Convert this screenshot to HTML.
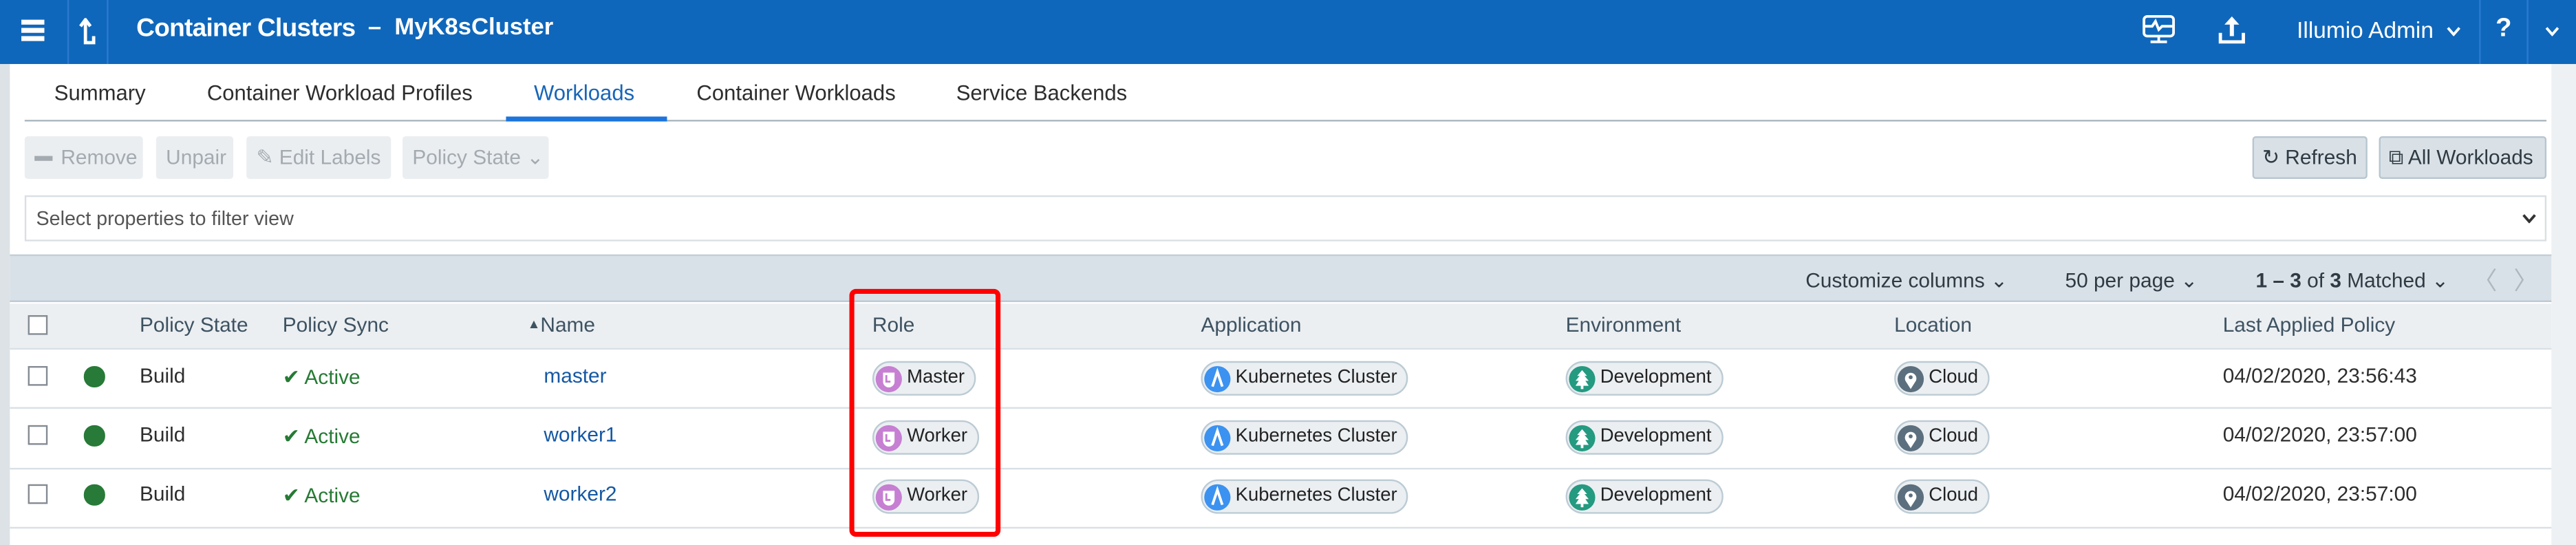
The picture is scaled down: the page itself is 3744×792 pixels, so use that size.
<!DOCTYPE html>
<html><head><meta charset="utf-8">
<style>
*{box-sizing:border-box;margin:0;padding:0}
html,body{width:3744px;height:792px;overflow:hidden;background:#fff}
#w{width:1568px;height:332px;transform:scale(2.3878,2.3855);transform-origin:0 0;position:relative;font-family:"Liberation Sans",sans-serif;color:#2d2d2d;background:#fff}
.a{position:absolute;white-space:nowrap}
.hd{position:absolute;left:0;top:0;width:1568px;height:38.5px;background:#0f67bb}
.vd{position:absolute;top:0;height:38.5px;width:1px;background:#2a7ad0}
.t{font-size:13px}
.btn{position:absolute;top:83px;height:26px;background:#ebeef1;border-radius:2px;color:#a3abb1;font-size:12.5px;line-height:26px;padding-left:6px}
.btn2{position:absolute;top:83px;height:26px;background:#d9e1e7;border:1px solid #b8c6cf;border-radius:2px;color:#2f3a42;font-size:12.5px;line-height:24px}
.th{font-size:12.5px;color:#3e5261;top:191px}
.cb{position:absolute;left:17px;width:12px;height:12px;border:1.3px solid #858b92;background:#fff}
.dot{position:absolute;left:51px;width:12.5px;height:12.5px;border-radius:50%;background:#277a37}
.pill{position:absolute;height:21px;border:1px solid #bccbd4;background:#ebeff2;border-radius:11px;font-size:11.5px;line-height:19px;padding:0 6px 0 20px;color:#222}
.ic{position:absolute;left:1px;top:1.5px;width:16px;height:16px;border-radius:50%}
.ic svg{position:absolute;left:0;top:0}
.rs{position:absolute;left:6px;width:1547px;height:1px;background:#d8e0e6}
</style></head><body><div id="w">
<div class="a" style="left:0;top:38px;width:6px;height:294px;background:#dde2e6"></div>
<div class="a" style="left:1553px;top:38px;width:15px;height:294px;background:#eef1f3"></div>
<div class="hd"></div>
<div class="vd" style="left:40.5px"></div><div class="vd" style="left:65px"></div>
<div class="vd" style="left:1509px"></div><div class="vd" style="left:1538px"></div>
<div class="a" style="left:13px;top:12px;width:14px;height:2.5px;background:#fff;box-shadow:0 5px 0 #fff,0 10px 0 #fff"></div>
<svg class="a" style="left:48px;top:11px" width="12" height="17" viewBox="0 0 12 17"><path d="M4 16V2M1 5l3-4 3 4M4 15h5V11" stroke="#fff" stroke-width="2" fill="none"/></svg>
<div class="a" style="left:83px;top:9px;color:#fff;font-weight:bold;font-size:15.5px;letter-spacing:-0.3px">Container Clusters</div>
<div class="a" style="left:224px;top:9px;color:#fff;font-weight:bold;font-size:14.5px">–&nbsp; MyK8sCluster</div>
<svg class="a" style="left:1304px;top:9px" width="20" height="18" viewBox="0 0 20 18"><rect x="1" y="1" width="18" height="12" rx="2" stroke="#fff" stroke-width="1.6" fill="none"/><path d="M1 7h5l2-3 2 5 2-2h7M10 13v3M5 16.5h10" stroke="#fff" stroke-width="1.6" fill="none"/></svg>
<svg class="a" style="left:1350px;top:9px" width="17" height="18" viewBox="0 0 17 18"><path d="M8.5 13V3" stroke="#fff" stroke-width="2.5"/><path d="M4 6l4.5-5 4.5 5z" fill="#fff"/><path d="M1.5 11v5.5h14V11" stroke="#fff" stroke-width="2" fill="none"/></svg>
<div class="a" style="left:1398px;top:10px;color:#fff;font-size:14px">Illumio Admin</div>
<svg class="a" style="left:1489px;top:16px" width="9" height="6" viewBox="0 0 9 6"><path d="M1 1l3.5 4 3.5-4" stroke="#fff" stroke-width="1.6" fill="none"/></svg>
<div class="a" style="left:1519px;top:9px;color:#fff;font-size:16px;font-weight:bold">?</div>
<svg class="a" style="left:1549px;top:16px" width="9" height="6" viewBox="0 0 9 6"><path d="M1 1l3.5 4 3.5-4" stroke="#fff" stroke-width="1.6" fill="none"/></svg>
<div class="a t" style="left:33px;top:49px;font-size:13px">Summary</div>
<div class="a t" style="left:126px;top:49px">Container Workload Profiles</div>
<div class="a t" style="left:325px;top:49px;color:#1865b8">Workloads</div>
<div class="a t" style="left:424px;top:49px">Container Workloads</div>
<div class="a t" style="left:582px;top:49px">Service Backends</div>
<div class="a" style="left:15px;top:73px;width:1535px;height:1.2px;background:#aab6bd"></div>
<div class="a" style="left:308px;top:71px;width:98px;height:3px;background:#1c74dc"></div>
<div class="btn" style="left:15px;width:72px"><span style="display:inline-block;width:11px;height:2.5px;background:#a3abb1;vertical-align:middle;margin-right:5px"></span>Remove</div>
<div class="btn" style="left:95px;width:47px">Unpair</div>
<div class="btn" style="left:150px;width:88px">✎ Edit Labels</div>
<div class="btn" style="left:245px;width:89px">Policy State ⌄</div>
<div class="btn2" style="left:1371px;width:70px;padding-left:5px">↻ Refresh</div>
<div class="btn2" style="left:1448px;width:102px;padding-left:5px">⧉ All Workloads</div>
<div class="a" style="left:15px;top:119px;width:1535px;height:28px;border:1px solid #d9dfe3;background:#fff"></div>
<div class="a" style="left:22px;top:126px;font-size:12px;color:#555">Select properties to filter view</div>
<svg class="a" style="left:1535px;top:130px" width="9" height="6" viewBox="0 0 9 6"><path d="M1 1l3.5 4 3.5-4" stroke="#333" stroke-width="1.6" fill="none"/></svg>
<div class="a" style="left:6px;top:155px;width:1547px;height:29px;background:#d9e1e8;border-top:1px solid #c3cfd7;border-bottom:1.5px solid #bccad3"></div>
<div class="a" style="left:1099px;top:163px;font-size:12.5px;color:#2f3a42">Customize columns ⌄</div>
<div class="a" style="left:1257px;top:163px;font-size:12.5px;color:#2f3a42">50 per page ⌄</div>
<div class="a" style="left:1373px;top:163px;font-size:12.5px;color:#2f3a42"><b>1 – 3</b> of <b>3</b> Matched ⌄</div>
<div class="a" style="left:1505px;top:160px;font-size:15px;color:#b0b8be">〈</div>
<div class="a" style="left:1530px;top:160px;font-size:15px;color:#b0b8be">〉</div>
<div class="a" style="left:6px;top:185px;width:1547px;height:27px;background:#ebeff2"></div>
<div class="cb" style="top:192px"></div>
<div class="a th" style="left:85px">Policy State</div>
<div class="a th" style="left:172px">Policy Sync</div>
<div class="a th" style="left:321px"><span style="font-size:8px;vertical-align:2px">▲</span>Name</div>
<div class="a th" style="left:531px">Role</div>
<div class="a th" style="left:731px">Application</div>
<div class="a th" style="left:953px">Environment</div>
<div class="a th" style="left:1153px">Location</div>
<div class="a th" style="left:1353px">Last Applied Policy</div>
<div class="rs" style="top:212px"></div><div class="rs" style="top:248px"></div><div class="rs" style="top:285px"></div><div class="rs" style="top:321px"></div>

<div class="cb" style="top:223px"></div><div class="dot" style="top:223px"></div>
<div class="a" style="left:85px;top:222px;font-size:12.5px">Build</div>
<div class="a" style="left:172px;top:222px;font-size:12.5px;color:#267a34">✔ Active</div>
<div class="a" style="left:331px;top:222px;font-size:12.5px;color:#1558a3">master</div>
<div class="pill" style="left:531px;top:220px"><span class="ic" style="background:#c67fd2"><svg width="16" height="16" viewBox="0 0 16 16"><path d="M4.5 4h7v5.5a3.5 3.5 0 0 1-7 0z" fill="#fff"/><path d="M6.5 5.5v4h2.5" stroke="#c67fd2" stroke-width="1.2" fill="none"/></svg></span>Master</div>
<div class="pill" style="left:731px;top:220px"><span class="ic" style="background:#3b92f0"><svg width="16" height="16" viewBox="0 0 16 16"><path d="M5 12.5L8 3.5l3 9" stroke="#fff" stroke-width="1.6" fill="none"/></svg></span>Kubernetes Cluster</div>
<div class="pill" style="left:953px;top:220px"><span class="ic" style="background:#249a80"><svg width="16" height="16" viewBox="0 0 16 16"><path d="M8 2.5l3 3.5H9.5l2.5 3H10l2 3H4l2-3H4l2.5-3H5z M7.2 12h1.6v2H7.2z" fill="#fff"/></svg></span>Development</div>
<div class="pill" style="left:1153px;top:220px"><span class="ic" style="background:#5c6f7e"><svg width="16" height="16" viewBox="0 0 16 16"><path d="M8 14l-3.2-5A3.5 3.5 0 1 1 11.2 9z" fill="#fff"/><circle cx="8" cy="6.8" r="1.2" fill="#5c6f7e"/></svg></span>Cloud</div>
<div class="a" style="left:1353px;top:222px;font-size:12.5px">04/02/2020, 23:56:43</div>

<div class="cb" style="top:259px"></div><div class="dot" style="top:259px"></div>
<div class="a" style="left:85px;top:258px;font-size:12.5px">Build</div>
<div class="a" style="left:172px;top:258px;font-size:12.5px;color:#267a34">✔ Active</div>
<div class="a" style="left:331px;top:258px;font-size:12.5px;color:#1558a3">worker1</div>
<div class="pill" style="left:531px;top:256px"><span class="ic" style="background:#c67fd2"><svg width="16" height="16" viewBox="0 0 16 16"><path d="M4.5 4h7v5.5a3.5 3.5 0 0 1-7 0z" fill="#fff"/><path d="M6.5 5.5v4h2.5" stroke="#c67fd2" stroke-width="1.2" fill="none"/></svg></span>Worker</div>
<div class="pill" style="left:731px;top:256px"><span class="ic" style="background:#3b92f0"><svg width="16" height="16" viewBox="0 0 16 16"><path d="M5 12.5L8 3.5l3 9" stroke="#fff" stroke-width="1.6" fill="none"/></svg></span>Kubernetes Cluster</div>
<div class="pill" style="left:953px;top:256px"><span class="ic" style="background:#249a80"><svg width="16" height="16" viewBox="0 0 16 16"><path d="M8 2.5l3 3.5H9.5l2.5 3H10l2 3H4l2-3H4l2.5-3H5z M7.2 12h1.6v2H7.2z" fill="#fff"/></svg></span>Development</div>
<div class="pill" style="left:1153px;top:256px"><span class="ic" style="background:#5c6f7e"><svg width="16" height="16" viewBox="0 0 16 16"><path d="M8 14l-3.2-5A3.5 3.5 0 1 1 11.2 9z" fill="#fff"/><circle cx="8" cy="6.8" r="1.2" fill="#5c6f7e"/></svg></span>Cloud</div>
<div class="a" style="left:1353px;top:258px;font-size:12.5px">04/02/2020, 23:57:00</div>

<div class="cb" style="top:295px"></div><div class="dot" style="top:295px"></div>
<div class="a" style="left:85px;top:294px;font-size:12.5px">Build</div>
<div class="a" style="left:172px;top:294px;font-size:12.5px;color:#267a34">✔ Active</div>
<div class="a" style="left:331px;top:294px;font-size:12.5px;color:#1558a3">worker2</div>
<div class="pill" style="left:531px;top:292px"><span class="ic" style="background:#c67fd2"><svg width="16" height="16" viewBox="0 0 16 16"><path d="M4.5 4h7v5.5a3.5 3.5 0 0 1-7 0z" fill="#fff"/><path d="M6.5 5.5v4h2.5" stroke="#c67fd2" stroke-width="1.2" fill="none"/></svg></span>Worker</div>
<div class="pill" style="left:731px;top:292px"><span class="ic" style="background:#3b92f0"><svg width="16" height="16" viewBox="0 0 16 16"><path d="M5 12.5L8 3.5l3 9" stroke="#fff" stroke-width="1.6" fill="none"/></svg></span>Kubernetes Cluster</div>
<div class="pill" style="left:953px;top:292px"><span class="ic" style="background:#249a80"><svg width="16" height="16" viewBox="0 0 16 16"><path d="M8 2.5l3 3.5H9.5l2.5 3H10l2 3H4l2-3H4l2.5-3H5z M7.2 12h1.6v2H7.2z" fill="#fff"/></svg></span>Development</div>
<div class="pill" style="left:1153px;top:292px"><span class="ic" style="background:#5c6f7e"><svg width="16" height="16" viewBox="0 0 16 16"><path d="M8 14l-3.2-5A3.5 3.5 0 1 1 11.2 9z" fill="#fff"/><circle cx="8" cy="6.8" r="1.2" fill="#5c6f7e"/></svg></span>Cloud</div>
<div class="a" style="left:1353px;top:294px;font-size:12.5px">04/02/2020, 23:57:00</div>

<div class="a" style="left:517px;top:176px;width:92px;height:151px;border:3px solid #f00;border-radius:4px"></div>
</div></body></html>
